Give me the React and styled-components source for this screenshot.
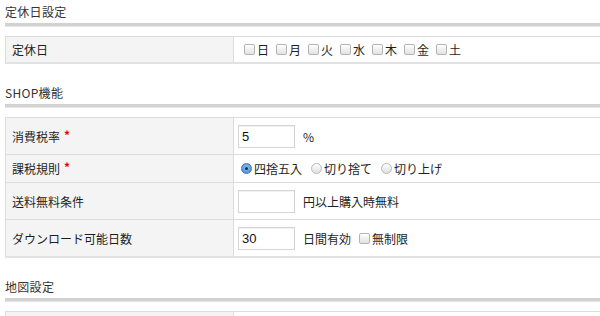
import React from "react";
import styled, { createGlobalStyle } from "styled-components";

const Global = createGlobalStyle`
  html, body { margin: 0; padding: 0; background: #fff; overflow: hidden; }
  body { font-family: "Noto Sans CJK JP", "Noto Sans", sans-serif; color: #333; }
`;

const Page = styled.div`
  width: 760px;
  padding-left: 5px;
`;

const Section = styled.section`
  margin-bottom: 17px;
`;

const Heading = styled.h2`
  margin: 0;
  height: 23px;
  line-height: 23px;
  font-size: 12px;
  font-weight: normal;
  color: #333;
  letter-spacing: 0.3px;
`;

const Rule = styled.div`
  height: 3px;
  background: #d2d2d2;
  border-bottom: 1px solid #e6e6e6;
  margin-bottom: 9px;
`;

const Table = styled.div`
  border-top: 1px solid #dcdcdc;
  border-bottom: 2px solid #e2e2e2;
`;

const Row = styled.div`
  display: grid;
  grid-template-columns: 229px 1fr;
  min-height: ${(p) => p.$h}px;
  border-bottom: ${(p) => (p.$last ? "none" : "1px solid #dcdcdc")};
`;

const Label = styled.div`
  background: #f4f4f4;
  border-left: 1px solid #dcdcdc;
  border-right: 1px solid #dcdcdc;
  display: flex;
  align-items: center;
  padding-left: 6px;
  font-size: 12px;
  color: #1e1e1e;
`;

const Req = styled.span`
  color: #e60012;
  margin-left: 4px;
  font-size: 12px;
  font-weight: bold;
  position: relative;
  top: -2px;
`;

const Value = styled.div`
  display: flex;
  align-items: center;
  padding-left: ${(p) => p.$pl ?? 4}px;
  font-size: 12px;
  color: #1e1e1e;
`;

const Option = styled.label`
  display: inline-flex;
  align-items: center;
  margin-right: ${(p) => p.$mr ?? 8}px;
  margin-left: ${(p) => p.$ml ?? 0}px;
`;

const Box = styled.span`
  display: inline-block;
  width: 9px;
  height: 9px;
  border: 1px solid #b4b4b4;
  border-radius: 2px;
  background: linear-gradient(#fdfdfd, #e2e2e2);
  margin-right: 2px;
  box-shadow: inset 0 1px 0 #fff;
`;

const Radio = styled.span`
  display: inline-block;
  position: relative;
  width: 11px;
  height: 11px;
  border-radius: 50%;
  box-sizing: border-box;
  margin-right: 2px;
  border: 1px solid ${(p) => (p.$on ? "#3a78c9" : "#b8b8b8")};
  background: ${(p) =>
    p.$on ? "radial-gradient(circle at 50% 40%, #8ec1f3, #3b83d6)" : "linear-gradient(#fdfdfd, #e0e0e0)"};
  &::after {
    content: "";
    display: ${(p) => (p.$on ? "block" : "none")};
    position: absolute;
    left: 3px;
    top: 3px;
    width: 3px;
    height: 3px;
    border-radius: 50%;
    background: #1b2a3a;
  }
`;

const Input = styled.div`
  width: 52px;
  height: 21px;
  border: 1px solid #d4d4d4;
  box-shadow: inset 0 1px 1px rgba(0, 0, 0, 0.06);
  display: flex;
  align-items: center;
  padding-left: 3px;
  box-sizing: content-box;
  font-family: "Liberation Sans", Arial, sans-serif;
  font-size: 13px;
  color: #111;
  margin-right: 8px;
`;

const days = ["日", "月", "火", "水", "木", "金", "土"];

export default function App() {
  return (
    <Page>
      <Global />
      <Section>
        <Heading>定休日設定</Heading>
        <Rule />
        <Table>
          <Row $h={25} $last>
            <Label>定休日</Label>
            <Value $pl={10}>
              {days.map((d) => (
                <Option key={d} $mr={7}>
                  <Box />
                  {d}
                </Option>
              ))}
            </Value>
          </Row>
        </Table>
      </Section>

      <Section>
        <Heading>SHOP機能</Heading>
        <Rule />
        <Table>
          <Row $h={36}>
            <Label>
              消費税率<Req>*</Req>
            </Label>
            <Value>
              <Input>5</Input>%
            </Value>
          </Row>
          <Row $h={27}>
            <Label>
              課税規則<Req>*</Req>
            </Label>
            <Value $pl={7}>
              <Option $mr={9}>
                <Radio $on />
                四捨五入
              </Option>
              <Option $mr={9}>
                <Radio />
                切り捨て
              </Option>
              <Option>
                <Radio />
                切り上げ
              </Option>
            </Value>
          </Row>
          <Row $h={36}>
            <Label>送料無料条件</Label>
            <Value>
              <Input />
              円以上購入時無料
            </Value>
          </Row>
          <Row $h={36} $last>
            <Label>ダウンロード可能日数</Label>
            <Value>
              <Input>30</Input>
              日間有効
              <Option $ml={8}>
                <Box />
                無制限
              </Option>
            </Value>
          </Row>
        </Table>
      </Section>

      <Section>
        <Heading>地図設定</Heading>
        <Rule />
        <Table>
          <Row $h={30} $last>
            <Label />
            <Value />
          </Row>
        </Table>
      </Section>
    </Page>
  );
}
